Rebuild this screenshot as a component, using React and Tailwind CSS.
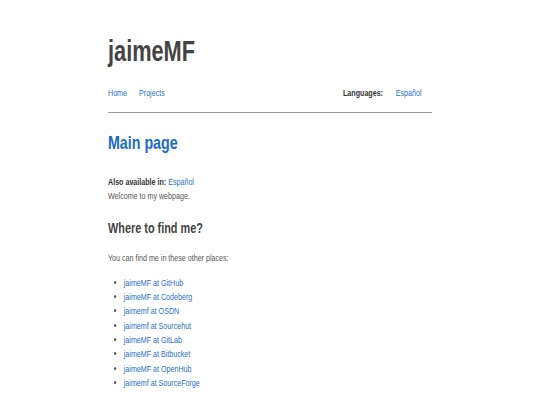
export default function App() {
  const places = [
    "jaimeMF at GitHub",
    "jaimeMF at Codeberg",
    "jaimemf at OSDN",
    "jaimemf at Sourcehut",
    "jaimeMF at GitLab",
    "jaimeMF at Bitbucket",
    "jaimeMF at OpenHub",
    "jaimemf at SourceForge",
  ];
  return (
    <div className="w-[540px] h-[405px] overflow-hidden bg-white font-['Liberation_Sans',Arial,sans-serif]">
      <div className="w-[720px] origin-top-left scale-x-75">
        <div className="mx-auto w-[432px] pt-[37px]">
          <header>
            <h1 className="text-[29px] leading-[29px] font-bold text-[#444]">jaimeMF</h1>
            <nav className="mt-[20px] flex justify-between text-[9.5px] leading-[14px]">
              <div className="flex gap-4">
                <a className="text-[#1f6fc5]">Home</a>
                <a className="text-[#1f6fc5]">Projects</a>
              </div>
              <div className="flex gap-[17px] mr-[14px]">
                <span className="font-bold text-[#333]">Languages:</span>
                <a className="text-[#1f6fc5]">Español</a>
              </div>
            </nav>
            <div className="mt-[12px] h-px bg-[#9a9a9a]"></div>
          </header>
          <main className="text-[9.5px] leading-[14.3px] text-[#555]">
            <h2 className="mt-[20px] text-[19px] leading-[20px] font-bold text-[#1a6bc7]">Main page</h2>
            <p className="mt-[22px]">
              <span className="font-bold text-[#333]">Also available in:</span>{" "}
              <a className="text-[#1f6fc5]">Español</a>
            </p>
            <p>Welcome to my webpage.</p>
            <h3 className="mt-[16px] text-[14.5px] leading-[17px] font-bold text-[#444]">Where to find me?</h3>
            <p className="mt-[14px]">You can find me in these other places:</p>
            <ul className="mt-[11px] list-disc pl-[21px] marker:text-[#555]">
              {places.map((p) => (
                <li key={p}>
                  <a className="text-[#1f6fc5]">{p}</a>
                </li>
              ))}
            </ul>
          </main>
        </div>
      </div>
    </div>
  );
}
